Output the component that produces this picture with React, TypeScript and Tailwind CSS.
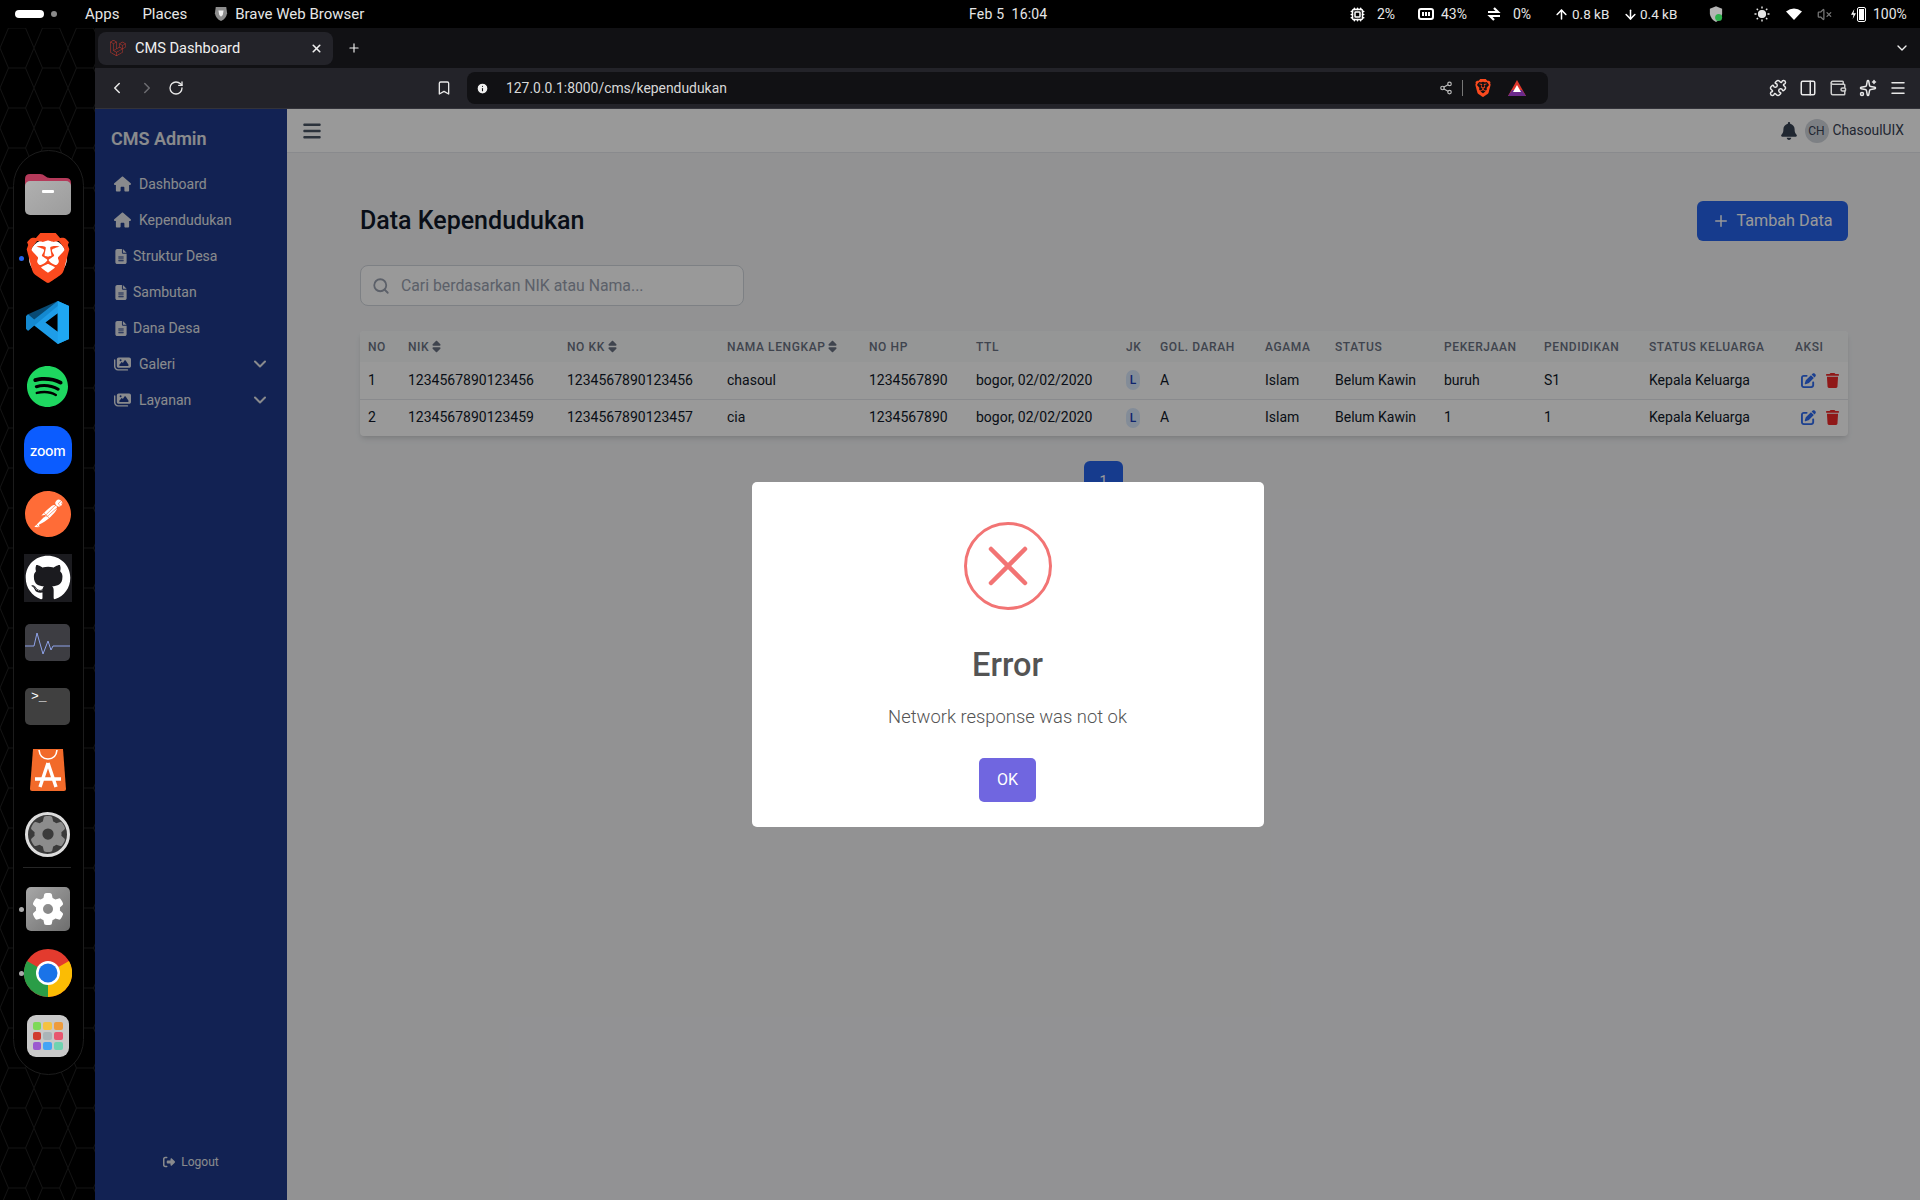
import { ArrowDown, ArrowUp, Bookmark, ChevronDown, ChevronLeft, ChevronRight, Cpu, Info, Menu, PanelRight, Plus, Puzzle, RotateCw, Search, Share2, Sparkles, VolumeX, Wallet, X } from 'lucide-react'
import { FaBars, FaBell, FaFileLines, FaGear, FaGithub, FaHouse, FaImages, FaPenToSquare, FaRightFromBracket, FaSort, FaTrash } from 'react-icons/fa6'
import { SiBrave, SiLaravel, SiPostman, SiSpotify } from 'react-icons/si'

const menu = [
  { icon: FaHouse, label: 'Dashboard', wide: true },
  { icon: FaHouse, label: 'Kependudukan', wide: true },
  { icon: FaFileLines, label: 'Struktur Desa' },
  { icon: FaFileLines, label: 'Sambutan' },
  { icon: FaFileLines, label: 'Dana Desa' },
  { icon: FaImages, label: 'Galeri', wide: true, sub: true },
  { icon: FaImages, label: 'Layanan', wide: true, sub: true },
]

const columns = [
  { label: 'No', w: 'w-[40px]' },
  { label: 'NIK', w: 'w-[159px]', sort: true },
  { label: 'No KK', w: 'w-[160px]', sort: true },
  { label: 'Nama Lengkap', w: 'w-[142px]', sort: true },
  { label: 'No HP', w: 'w-[107px]' },
  { label: 'TTL', w: 'w-[150px]' },
  { label: 'JK', w: 'w-[34px]' },
  { label: 'Gol. Darah', w: 'w-[105px]' },
  { label: 'Agama', w: 'w-[70px]' },
  { label: 'Status', w: 'w-[109px]' },
  { label: 'Pekerjaan', w: 'w-[100px]' },
  { label: 'Pendidikan', w: 'w-[105px]' },
  { label: 'Status Keluarga', w: 'w-[146px]' },
  { label: 'Aksi', w: 'w-[61px]' },
]

const rows = [
  { no: 1, nik: '1234567890123456', kk: '1234567890123456', nama: 'chasoul', kerja: 'buruh', didik: 'S1' },
  { no: 2, nik: '1234567890123459', kk: '1234567890123457', nama: 'cia', kerja: '1', didik: '1' },
]

function BraveLogo({ className }: { className: string }) {
  return (
    <span className={`relative flex items-center justify-center ${className}`}>
      <span className="absolute inset-[12%] rounded-full bg-white" />
      <SiBrave className="relative h-full w-full text-[#fb4a1e]" />
    </span>
  )
}

function Dock() {
  const slot = 'relative flex h-16 items-center justify-center'
  const cell = 'h-[8px] rounded-[2px]'
  return (
    <div className="relative h-full w-[95px] shrink-0 overflow-hidden bg-black">
      <svg className="absolute inset-0 h-full w-full">
        <defs>
          <pattern id="hex" width="34" height="40" patternUnits="userSpaceOnUse">
            <path d="M8.5 0 L25.5 0 L34 20 L25.5 40 L8.5 40 L0 20 Z" fill="none" stroke="#131313" strokeWidth="1" />
          </pattern>
        </defs>
        <rect width="95" height="1172" fill="url(#hex)" />
      </svg>
      <div className="absolute left-[13px] top-[122px] h-[925px] w-[71px] rounded-[36px] border border-[#1c1c1c] bg-black" />
      <div className="relative flex flex-col pt-[134px]">
        <div className={slot}>
          <svg viewBox="0 0 46 41" className="h-[41px] w-[46px]">
            <defs>
              <linearGradient id="folderBody" x1="0" y1="0" x2="1" y2="1">
                <stop offset="0" stopColor="#b0b0b0" />
                <stop offset="1" stopColor="#9c9c9c" />
              </linearGradient>
            </defs>
            <path d="M0 5 Q0 0 5 0 H15 Q18 0 20 2 Q22 4 25 4 H41 Q46 4 46 9 V20 H0 Z" fill="#b53a5a" />
            <rect y="7" width="46" height="34" rx="5" fill="url(#folderBody)" />
            <rect x="17" y="16" width="12" height="3" rx="1" fill="#ffffff" />
          </svg>
        </div>
        <div className={slot}>
          <span className="absolute left-[19px] h-[5px] w-[5px] rounded-full bg-[#2563eb]" />
          <BraveLogo className="h-[50px] w-[50px]" />
        </div>
        <div className={slot}>
          <svg viewBox="0 0 42 42" className="h-[43px] w-[43px]">
            <path d="M31 0 L42 5 V37 L31 42 L8 24 L2 29 L0 27 V15 L2 13 L8 18 Z M31 12 L19 21 L31 30 Z" fill="#1e9de8" fillRule="evenodd" />
            <path d="M31 0 L42 5 V37 L31 42 Z" fill="#1fa7f2" />
            <path d="M2 13 L0 15 V27 L2 29 L31 5 V0 Z" fill="#0d7cc0" opacity="0.6" />
          </svg>
        </div>
        <div className={slot}>
          <SiSpotify className="h-[41px] w-[41px] text-[#1ed760]" />
        </div>
        <div className={slot}>
          <div className="flex h-[48px] w-[48px] items-center justify-center rounded-[18px] bg-[#0b5cff] font-['Inter',sans-serif] text-[14px] font-medium tracking-tight text-white">
            zoom
          </div>
        </div>
        <div className={slot}>
          <span className="relative flex h-[46px] w-[46px] items-center justify-center">
            <span className="absolute inset-1 rounded-full bg-white" />
            <SiPostman className="relative h-full w-full text-[#ff6c37]" />
          </span>
        </div>
        <div className={slot}>
          <div className="flex h-[48px] w-[48px] items-center justify-center bg-[#1b1b1f]">
            <FaGithub className="h-[46px] w-[46px] text-white" />
          </div>
        </div>
        <div className={slot}>
          <div className="h-[37px] w-[45px] overflow-hidden rounded-[5px] bg-[#3d3d42]">
            <svg viewBox="0 0 45 37" className="h-full w-full" fill="none" stroke="#8fa3e8" strokeWidth="1">
              <path d="M0 22 H9 L12 9 L18 30 L23 17 L26 26 L28 22 H45" />
            </svg>
          </div>
        </div>
        <div className={slot}>
          <div className="h-[37px] w-[45px] rounded-[5px] bg-[#404040] pl-[6px] font-['Liberation_Mono',monospace] text-[13px] leading-[18px] text-white">
            &gt;_
          </div>
        </div>
        <div className={slot}>
          <svg viewBox="0 0 36 42" className="h-[42px] w-[36px]">
            <path d="M3 0 H33 L36 40 Q36 42 34 42 H2 Q0 42 0 40 Z" fill="#f26a2a" />
            <path d="M9 1 Q10 10 18 10 Q26 10 27 1" fill="none" stroke="#fff" strokeWidth="1.6" />
            <path d="M18 14 L10 38 M18 14 L26 38 M5 30 H31" fill="none" stroke="#fff" strokeWidth="3.4" />
          </svg>
        </div>
        <div className={slot}>
          <div className="relative flex h-[45px] w-[45px] items-center justify-center rounded-full border-[3px] border-[#dcdcdc] bg-[#3a3a3a]">
            <FaGear className="h-[36px] w-[36px] text-[#8c8c8c]" />
          </div>
        </div>
        <div className="ml-[23px] mt-px h-px w-[48px] bg-[#262626]" />
        <div className={`${slot} mt-[9px]`}>
          <span className="absolute left-[19px] h-[5px] w-[5px] rounded-full bg-[#aaaaaa]" />
          <div className="flex h-[44px] w-[44px] items-center justify-center rounded-[5px] bg-gradient-to-br from-[#a8a8a8] to-[#6e6e6e]">
            <FaGear className="h-[32px] w-[32px] text-white" />
          </div>
        </div>
        <div className={slot}>
          <span className="absolute left-[19px] h-[5px] w-[5px] rounded-full bg-[#aaaaaa]" />
          <svg viewBox="0 0 48 48" className="h-[48px] w-[48px]">
            <circle cx="24" cy="24" r="24" fill="#e33b2e" />
            <path d="M24 24 L45 12 A24 24 0 0 1 24 48 Z" fill="#fbbc04" />
            <path d="M24 24 L24 48 A24 24 0 0 1 3 12 Z" fill="#2a9d47" />
            <circle cx="24" cy="24" r="12" fill="#fff" />
            <circle cx="24" cy="24" r="9.5" fill="#1a73e8" />
          </svg>
        </div>
        <div className="relative flex h-[62px] items-center justify-center">
          <div className="grid h-[42px] w-[42px] grid-cols-3 content-center gap-[2px] rounded-[9px] bg-[#c9c9c9] px-[6px]">
            <span className={`${cell} bg-[#7ed957]`} />
            <span className={`${cell} bg-[#f5c242]`} />
            <span className={`${cell} bg-[#ee9b3b]`} />
            <span className={`${cell} bg-[#d13a2e]`} />
            <span className={`${cell} bg-[#aab4b8]`} />
            <span className={`${cell} bg-[#e8566f]`} />
            <span className={`${cell} bg-[#9b59d0]`} />
            <span className={`${cell} bg-[#45a4f5]`} />
            <span className={`${cell} bg-[#6fd3b0]`} />
          </div>
        </div>
      </div>
    </div>
  )
}

function SystemBar() {
  return (
    <div className="relative flex h-[28px] shrink-0 items-center bg-black text-[15px] text-[#e6e6e6]">
      <span className="ml-[15px] h-[8px] w-[29px] rounded-full bg-white" />
      <span className="ml-[7px] h-[6px] w-[6px] rounded-full bg-[#8a8a8a]" />
      <span className="ml-[28px]">Apps</span>
      <span className="ml-[23px]">Places</span>
      <svg viewBox="0 0 16 18" className="ml-[27px] h-[16px] w-[14px]">
        <path d="M2 1 H14 L15 8 Q14 14 8 17 Q2 14 1 8 Z" fill="#8d8d8d" />
        <path d="M5 5 H11 L10 10 L8 12 L6 10 Z" fill="#eeeeee" />
      </svg>
      <span className="ml-[7px]">Brave Web Browser</span>
      <span className="absolute left-[969px] whitespace-pre text-[14px] tracking-[0.2px]">Feb 5  16:04</span>
      <div className="ml-auto flex items-center pr-[12px] text-[14px]">
        <Cpu className="mr-[12px] h-[15px] w-[15px] text-white" strokeWidth={2.4} />
        <span className="mr-[23px] w-[18px]">2%</span>
        <span className="mr-[7px] flex h-[12px] w-[16px] items-center justify-center gap-px rounded-[3px] border-2 border-white">
          <span className="h-[4px] w-[2px] bg-white" />
          <span className="h-[4px] w-[2px] bg-white" />
          <span className="h-[4px] w-[2px] bg-white" />
        </span>
        <span className="mr-[20px] w-[25px]">43%</span>
        <svg viewBox="0 0 16 16" className="mr-[11px] h-[16px] w-[16px]" fill="none" stroke="#ffffff" strokeWidth="2.2">
          <path d="M2 6 H12 L8 2 M14 10 H4 L8 14" />
        </svg>
        <span className="mr-[23px] w-[18px]">0%</span>
        <ArrowUp className="mr-[3px] h-[15px] w-[15px] text-white" strokeWidth={2.4} />
        <span className="mr-[16px] w-[35px] whitespace-nowrap text-[13.5px]">0.8 kB</span>
        <ArrowDown className="mr-[2px] h-[15px] w-[15px] text-white" strokeWidth={2.4} />
        <span className="mr-[34px] w-[35px] whitespace-nowrap text-[13.5px]">0.4 kB</span>
        <svg viewBox="0 0 16 18" className="mr-[31px] h-[16px] w-[14px]">
          <path d="M8 0 L15 3 V9 Q14 15 8 18 Q2 15 1 9 V3 Z" fill="#b5b5b5" />
          <circle cx="11" cy="13" r="4" fill="#2eb24d" />
        </svg>
        <svg viewBox="0 0 16 16" className="mr-[16px] h-[16px] w-[16px]" fill="none" stroke="#e6e6e6" strokeWidth="1.4">
          <circle cx="8" cy="8" r="3.4" fill="#e6e6e6" />
          <path d="M8 0.5 V2.5 M8 13.5 V15.5 M0.5 8 H2.5 M13.5 8 H15.5 M2.7 2.7 L4 4 M12 12 L13.3 13.3 M2.7 13.3 L4 12 M12 4 L13.3 2.7" />
        </svg>
        <svg viewBox="0 0 16 12" className="mr-[15px] h-[12px] w-[16px]">
          <path d="M0 3.5 Q8 -2.5 16 3.5 L8 12 Z" fill="#ffffff" />
        </svg>
        <VolumeX className="mr-[19px] h-[15px] w-[15px] text-[#777777]" />
        <svg viewBox="0 0 6 12" className="mr-px h-[12px] w-[5px]">
          <path d="M4 0 L0 7 H3 L2 12 L6 5 H3 Z" fill="#ffffff" />
        </svg>
        <span className="mr-[7px] flex h-[15px] w-[9px] items-end rounded-[2px] border border-white p-px">
          <span className="h-full w-full bg-white" />
        </span>
        <span className="w-[35px]">100%</span>
      </div>
    </div>
  )
}

function BrowserChrome() {
  return (
    <>
      <div className="flex h-[40px] shrink-0 items-center bg-[#111114] pl-[3px] pr-[10px] text-[#f0f0f0]">
        <div className="flex h-[33px] w-[235px] items-center rounded-lg bg-[#232329] pl-[12px] pr-[10px]">
          <SiLaravel className="h-[16px] w-[16px] text-[#c5372c]" />
          <span className="ml-[9px] mt-[2px] text-[14.6px]">CMS Dashboard</span>
          <X className="ml-auto h-[13px] w-[13px]" strokeWidth={3} />
        </div>
        <Plus className="ml-[14px] h-[14px] w-[14px]" strokeWidth={2} />
        <ChevronDown className="ml-auto h-[16px] w-[16px]" />
      </div>
      <div className="flex h-[41px] shrink-0 items-center border-b border-[#33333a] bg-[#232329] text-[#e8e8e8]">
        <ChevronLeft className="ml-[13px] h-[18px] w-[18px]" />
        <ChevronRight className="ml-[12px] h-[18px] w-[18px] text-[#6d6d72]" />
        <RotateCw className="ml-[12px] h-[16px] w-[16px]" />
        <Bookmark className="ml-[252px] h-[16px] w-[16px]" />
        <div className="ml-[15px] flex h-[32px] w-[1081px] items-center rounded-lg bg-[#111114] pl-[9px]">
          <Info className="h-[13px] w-[13px]" fill="#f0f0f0" stroke="#111114" />
          <span className="ml-[17px] text-[13.9px] text-[#d8d8d8]">127.0.0.1:8000/cms/kependudukan</span>
          <Share2 className="ml-auto h-[14px] w-[14px] text-[#bbbbbb]" />
          <span className="ml-[9px] h-[16px] w-px bg-[#777777]" />
          <SiBrave className="ml-[11px] h-[18px] w-[18px] text-[#fb4a1e]" />
          <svg viewBox="0 0 18 18" className="ml-[16px] mr-[22px] h-[18px] w-[18px]">
            <path d="M9 1 L18 17 H0 Z" fill="#e0382c" />
            <path d="M0 17 L4 11 H14 L18 17 Z" fill="#6b2a8c" />
            <path d="M9 6 L13 13 H5 Z" fill="#ffffff" />
          </svg>
        </div>
        <Puzzle className="ml-[221px] h-[18px] w-[18px]" />
        <PanelRight className="ml-[12px] h-[18px] w-[18px]" />
        <Wallet className="ml-[12px] h-[18px] w-[18px] text-[#cccccc]" />
        <Sparkles className="ml-[12px] h-[18px] w-[18px]" />
        <Menu className="ml-[12px] h-[18px] w-[18px]" />
      </div>
    </>
  )
}

function Sidebar() {
  return (
    <aside className="flex w-[192px] shrink-0 flex-col bg-[#1e3a8a] text-gray-200">
      <div className="px-4 pb-[13px] pt-[16px] text-[18px] font-semibold leading-[28px]">CMS Admin</div>
      <nav className="flex flex-col">
        {menu.map((item) => (
          <div key={item.label} className="flex h-[36px] items-center pl-[20px] pr-[17px] text-[14px]">
            <item.icon className={item.wide ? '-ml-px mr-[8px] h-[16px] w-[17px]' : 'mr-[6px] h-[15px] w-[12px]'} />
            <span>{item.label}</span>
            {item.sub && <ChevronDown className="ml-auto h-[20px] w-[20px]" strokeWidth={2.4} />}
          </div>
        ))}
      </nav>
      <div className="mt-auto flex items-center justify-center gap-[6px] pb-[29px] text-[12px]">
        <FaRightFromBracket className="h-[12px] w-[12px]" />
        <span>Logout</span>
      </div>
    </aside>
  )
}

function DataTable() {
  return (
    <div className="mt-[25px] overflow-hidden rounded-sm bg-white shadow-md">
      <table className="w-full table-fixed text-left text-[14px] text-gray-900">
        <thead className="bg-gray-50">
          <tr className="h-[31px]">
            {columns.map((col) => (
              <th key={col.label} className={`${col.w} px-2 text-[12px] font-medium uppercase tracking-[0.6px] text-gray-500`}>
                <span className="flex items-center gap-[3px] whitespace-nowrap">
                  {col.label}
                  {col.sort && <FaSort className="h-[13px] w-[9px]" />}
                </span>
              </th>
            ))}
          </tr>
        </thead>
        <tbody>
          {rows.map((row) => (
            <tr key={row.no} className="h-[37px] border-b border-gray-200 last:border-0">
              <td className="px-2">{row.no}</td>
              <td className="px-2">{row.nik}</td>
              <td className="px-2">{row.kk}</td>
              <td className="px-2">{row.nama}</td>
              <td className="px-2">1234567890</td>
              <td className="whitespace-nowrap px-2">bogor, 02/02/2020</td>
              <td className="px-2">
                <span className="flex h-[20px] w-[14px] items-center justify-center rounded-full bg-blue-100 text-[12px] font-medium text-blue-800">L</span>
              </td>
              <td className="px-2">A</td>
              <td className="px-2">Islam</td>
              <td className="whitespace-nowrap px-2">Belum Kawin</td>
              <td className="px-2">{row.kerja}</td>
              <td className="px-2">{row.didik}</td>
              <td className="whitespace-nowrap px-2">Kepala Keluarga</td>
              <td className="px-2">
                <span className="ml-[6px] flex items-center gap-[10px]">
                  <FaPenToSquare className="h-[15px] w-[15px] shrink-0 text-[#2f6bf0]" />
                  <FaTrash className="h-[15px] w-[13px] shrink-0 text-[#f02828]" />
                </span>
              </td>
            </tr>
          ))}
        </tbody>
      </table>
    </div>
  )
}

function ErrorDialog() {
  return (
    <div className="absolute inset-0 flex items-start justify-center bg-black/40 pt-[373px]">
      <div className="flex w-[512px] flex-col items-center rounded-[5px] bg-white pb-[25px] pt-10">
        <svg viewBox="0 0 88 88" className="h-[88px] w-[88px]" fill="none" stroke="#f27474">
          <circle cx="44" cy="44" r="42.5" strokeWidth="3" />
          <path d="M27 27 L61 61 M61 27 L27 61" strokeWidth="4.5" strokeLinecap="round" />
        </svg>
        <h2 className="mt-[37px] h-9 text-[32.5px] font-medium leading-9 text-[#545454]">Error</h2>
        <p className="mt-5 h-7 text-[18.4px] font-light leading-7 text-[#545454]">Network response was not ok</p>
        <button className="mt-[27px] h-[44px] w-[57px] rounded-[5px] bg-[#7066e0] text-[16px] text-white">OK</button>
      </div>
    </div>
  )
}

function Page() {
  return (
    <div className="relative flex min-h-0 flex-1">
      <Sidebar />
      <div className="flex min-w-0 flex-1 flex-col bg-gray-100">
        <header className="flex h-[44px] shrink-0 items-center border-b border-gray-200 bg-white pl-[16px] pr-[16px]">
          <FaBars className="h-[20px] w-[18px] text-gray-600" />
          <FaBell className="ml-auto h-[18px] w-[16px] text-gray-700" />
          <span className="ml-[8px] flex h-[24px] w-[24px] items-center justify-center rounded-full bg-gray-300 text-[12px] text-gray-700">CH</span>
          <span className="ml-[4px] text-[13.8px] text-gray-700">ChasoulUIX</span>
        </header>
        <main className="flex-1 pl-[73px] pr-[72px] pt-[48px]">
          <div className="flex h-[40px] items-center justify-between">
            <h1 className="text-[25px] font-medium text-gray-900">Data Kependudukan</h1>
            <button className="flex h-[40px] w-[151px] items-center justify-center gap-[6px] rounded-md bg-[#2563eb] text-[16.2px] text-white">
              <Plus className="h-[18px] w-[18px]" />
              Tambah Data
            </button>
          </div>
          <div className="mt-6 flex h-[41px] w-[384px] items-center rounded-lg border border-gray-300 bg-white pl-[11px]">
            <Search className="h-[18px] w-[18px] text-gray-400" strokeWidth={2.4} />
            <span className="ml-[11px] text-[15.8px] text-gray-400">Cari berdasarkan NIK atau Nama...</span>
          </div>
          <DataTable />
          <div className="mt-[25px] flex justify-center">
            <button className="-ml-px h-[40px] w-[39px] rounded-md bg-[#2563eb] text-[14px] text-white">1</button>
          </div>
        </main>
      </div>
      <ErrorDialog />
    </div>
  )
}

export default function App() {
  return (
    <div className="flex h-screen w-full flex-col overflow-hidden bg-black font-['Roboto',sans-serif]">
      <SystemBar />
      <div className="flex min-h-0 flex-1">
        <Dock />
        <div className="flex min-w-0 flex-1 flex-col">
          <BrowserChrome />
          <Page />
        </div>
      </div>
    </div>
  )
}
